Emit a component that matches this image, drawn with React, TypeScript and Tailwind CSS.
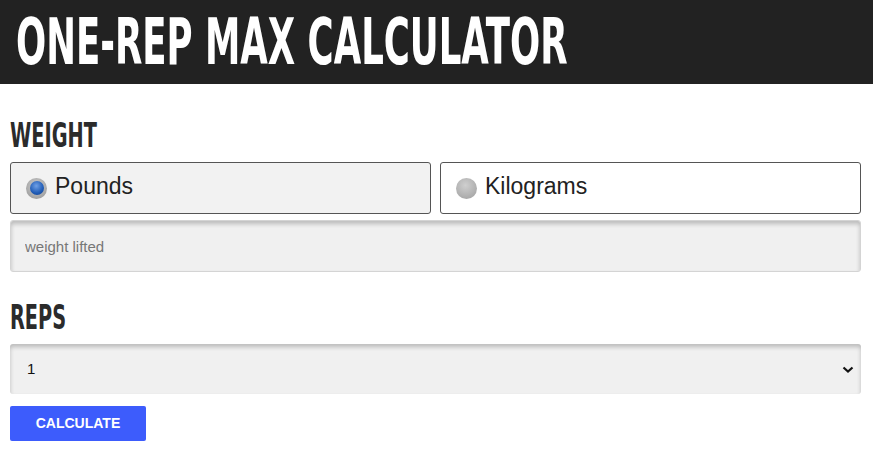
import { useState } from "react";

const body = "font-['Liberation_Sans',Arial,sans-serif]";
const condensed = "font-['DejaVu_Sans_Condensed',sans-serif]";

function Radio({ checked }: { checked: boolean }) {
  return checked ? (
    <span className="flex h-[21px] w-[21px] items-center justify-center rounded-full bg-[radial-gradient(circle_at_50%_40%,#d4d4d4,#8f8f8f)]">
      <span className="h-[14px] w-[14px] rounded-full bg-[radial-gradient(circle_at_45%_35%,#6fa0e6,#1f5bb5_60%,#123f8a)]" />
    </span>
  ) : (
    <span className="h-[21px] w-[21px] rounded-full bg-[radial-gradient(circle_at_45%_35%,#cfcfcf,#9d9d9d)]" />
  );
}

export default function App() {
  const [unit, setUnit] = useState<"lb" | "kg">("lb");

  return (
    <div className={`min-h-[454px] w-[873px] bg-white ${body}`}>
      <header className="flex h-[84px] items-center bg-[#222222] pl-[16px]">
        <h1
          className={`${condensed} origin-left scale-x-[0.617] text-[64px] font-bold leading-none whitespace-nowrap text-white`}
        >
          ONE-REP MAX CALCULATOR
        </h1>
      </header>

      <main className="px-[10px] pr-[12px]">
        <h2
          className={`${condensed} mt-[35px] origin-left scale-x-[0.65] text-[33px] leading-none font-bold text-[#2b2b2b]`}
        >
          WEIGHT
        </h2>

        <div className="mt-[10px] grid grid-cols-2 gap-[9px]">
          {(
            [
              ["lb", "Pounds"],
              ["kg", "Kilograms"],
            ] as const
          ).map(([key, label]) => (
            <button
              key={key}
              onClick={() => setUnit(key)}
              className={`flex h-[52px] items-center gap-[8px] rounded-[3px] border border-[#555555] pl-[15px] text-[23px] text-[#222222] ${
                unit === key ? "bg-[#f2f2f2]" : "bg-white"
              }`}
            >
              <Radio checked={unit === key} />
              <span className="-mt-[3px]">{label}</span>
            </button>
          ))}
        </div>

        <input
          placeholder="weight lifted"
          className="mt-[6px] block h-[52px] w-full rounded-[3px] border border-[#d4d4d4] bg-[#f0f0f0] px-[14px] text-[15px] text-[#333] shadow-[inset_0_3px_4px_rgba(0,0,0,0.22)] outline-none placeholder:text-[#777777]"
        />

        <h2
          className={`${condensed} mt-[29px] origin-left scale-x-[0.65] text-[33px] leading-none font-bold text-[#2b2b2b]`}
        >
          REPS
        </h2>

        <div className="relative mt-[10px]">
          <select className="block h-[50px] w-full appearance-none rounded-[3px] bg-[#f0f0f0] px-[17px] text-[15px] text-[#111] shadow-[inset_0_3px_4px_rgba(0,0,0,0.22)] outline-none">
            {Array.from({ length: 10 }, (_, i) => (
              <option key={i}>{i + 1}</option>
            ))}
          </select>
          <svg
            className="pointer-events-none absolute top-[21px] right-[7px] h-[9px] w-[12px]"
            viewBox="0 0 12 9"
            fill="none"
            stroke="#111"
            strokeWidth="2.2"
          >
            <path d="M1.5 2.5 6 6.5l4.5-4" />
          </svg>
        </div>

        <button className="mt-[12px] h-[35px] w-[136px] rounded-[2px] bg-[#3d5cfc] text-[14px] font-bold text-white">
          CALCULATE
        </button>
      </main>
    </div>
  );
}
